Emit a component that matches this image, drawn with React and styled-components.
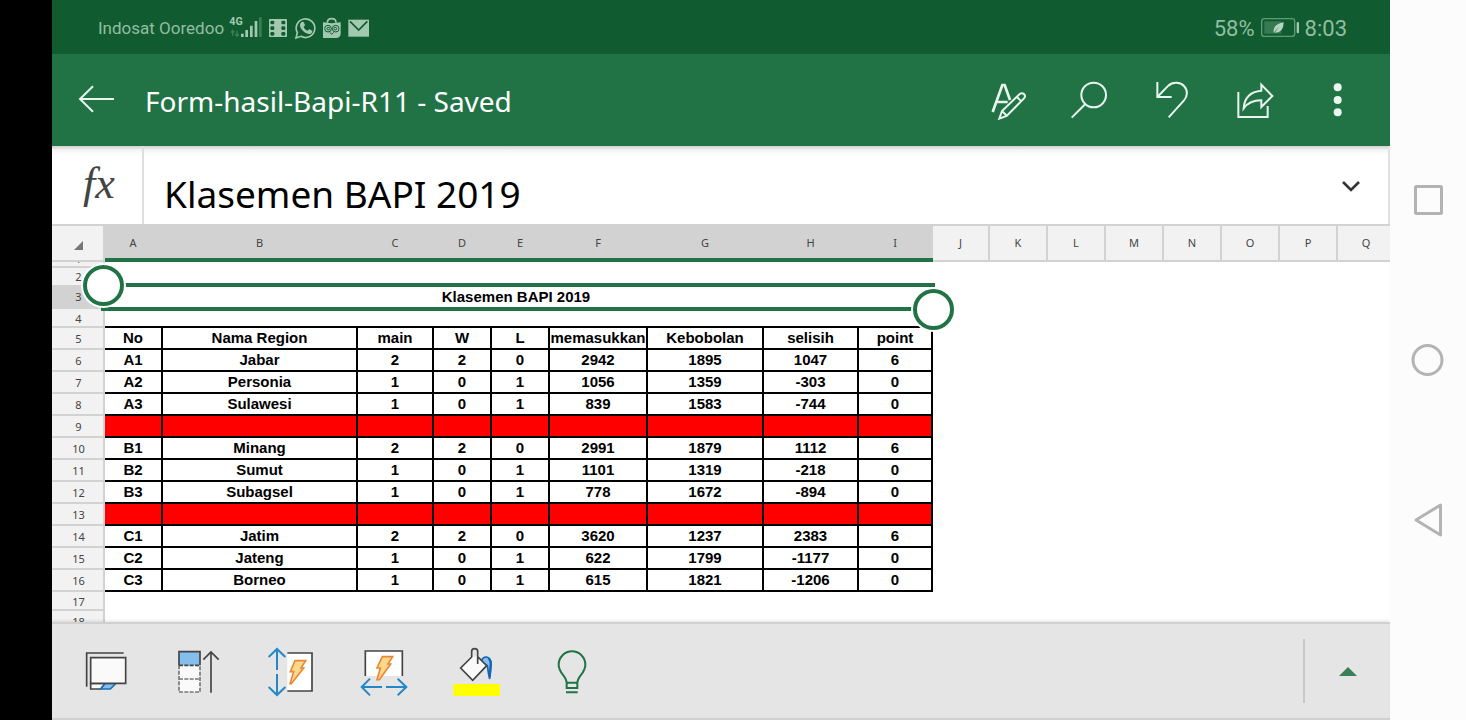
import React from "react";
import styled, { createGlobalStyle, css } from "styled-components";

const GlobalStyle = createGlobalStyle`
  * {
    box-sizing: border-box;
  }
  body {
    margin: 0;
    background: #fcfcfc;
  }
  button {
    padding: 0;
    border: 0;
    background: none;
    cursor: pointer;
  }
  svg {
    display: block;
    flex: none;
  }
`;

const Screen = styled.div`
  display: flex;
  height: 100vh;
  overflow: hidden;
  font-family: "Noto Sans", sans-serif;
`;

const Notch = styled.div`
  flex: none;
  width: 52px;
  background: #000;
`;

const AppColumn = styled.main`
  flex: 1;
  min-width: 0;
  display: flex;
  flex-direction: column;
  background: #fff;
`;

const StatusBar = styled.div`
  flex: none;
  height: 54px;
  padding: 2px 43px 0 46px;
  display: flex;
  align-items: center;
  justify-content: space-between;
  background: #105c30;
  color: #93bda2;
  font-family: Roboto, sans-serif;
`;

const StatusGroup = styled.div`
  display: flex;
  align-items: center;
  gap: ${(props) => props.$gap}px;
`;

const Carrier = styled.span`
  padding: 0 2px 1px 0;
  font-size: 17px;
`;

const StatusValue = styled.span`
  font-size: 22px;
`;

const AppBar = styled.header`
  flex: none;
  height: 92px;
  padding: 0 11px 0 4px;
  display: flex;
  align-items: center;
  background: #217346;
  color: #e9f7ee;
`;

const BarButton = styled.button`
  flex: none;
  width: 82px;
  height: 92px;
  display: flex;
  align-items: center;
  justify-content: center;
  color: inherit;
`;

const FileName = styled.h1`
  flex: 1;
  min-width: 0;
  margin: 0;
  padding: 2px 0 0 7px;
  font-size: 28px;
  font-weight: 400;
  line-height: 40px;
  white-space: nowrap;
  color: #fff;
`;

const FormulaBar = styled.div`
  flex: none;
  height: 78px;
  display: flex;
  align-items: stretch;
  border-right: 2px solid #e2e2e2;
  background: linear-gradient(#cfcfcf, #f4f4f4 4px, #fff 9px);
`;

const FxButton = styled.button`
  width: 92px;
  padding: 0 0 4px 4px;
  border-right: 2px solid #dedede;
  font: italic 44px "Liberation Serif", serif;
  color: #444;
`;

const FormulaInput = styled.input`
  flex: 1;
  min-width: 0;
  padding: 16px 0 0 20px;
  border: 0;
  outline: 0;
  background: none;
  font: 37px "Noto Sans", sans-serif;
  color: #000;
`;

const ExpandButton = styled.button`
  width: 74px;
  padding-top: 2px;
  display: flex;
  align-items: center;
  justify-content: center;
  color: #333;
`;

const SheetView = styled.div`
  flex: 1;
  min-height: 0;
  overflow: hidden;
`;

const Sheet = styled.table`
  width: 1344px;
  table-layout: fixed;
  border-collapse: separate;
  border-spacing: 0;
`;

const ColumnHead = styled.th`
  height: 38px;
  padding: 0;
  border-top: 2px solid #d2d2d2;
  border-right: 2px solid #d2d2d2;
  border-bottom: 2px solid #d2d2d2;
  background: #f2f2f2;
  font-size: 11px;
  font-weight: 400;
  line-height: 16px;
  color: #444;
  ${(props) =>
    props.$selected &&
    css`
      padding: 2px 2px 0 0;
      border-right: 0;
      border-bottom: 4px solid #217346;
      background: #d2d2d2;
    `}
`;

const SelectAll = styled.button`
  width: 100%;
  height: 34px;
  padding: 4px 0 0 2px;
  display: flex;
  align-items: center;
  justify-content: center;
`;

const RowHead = styled.th`
  padding: 0;
  border-right: 2px solid #d2d2d2;
  border-bottom: 2px solid ${(props) => (props.$unruled ? "#f2f2f2" : "#d2d2d2")};
  background: ${(props) => (props.$selected ? "#d2d2d2" : "#f2f2f2")};
  font-size: 11px;
  font-weight: 400;
  color: #444;
`;

const RowLabel = styled.div`
  height: ${(props) => props.$height - 2}px;
  padding: 2px 0 0 2px;
  display: flex;
  align-items: center;
  justify-content: center;
  line-height: 16px;
  overflow: hidden;
  ${(props) =>
    props.$scrolled &&
    css`
      padding-top: 0;
      align-items: flex-end;
      line-height: 14px;
    `}
`;

const Cell = styled.td`
  padding: 0;
  border-right: 2px solid #000;
  border-bottom: 2px solid #000;
  background: ${(props) => (props.$filled ? "#f00" : "#fff")};
  font: bold 15px/16px "Liberation Sans", Arial, sans-serif;
  text-align: center;
  white-space: nowrap;
  overflow: hidden;
`;

const BlankCell = styled.td`
  padding: 0;
  border-bottom: ${(props) => (props.$ruled ? "2px solid #000" : "0")};
`;

const TitleCell = styled.td`
  position: relative;
  padding: 0 6px 0 0;
  font: bold 15px/16px "Liberation Sans", Arial, sans-serif;
  text-align: center;
`;

const Selection = styled.div`
  position: absolute;
  inset: -2px -2px -2px -4px;
  border-top: 4px solid #217346;
  border-bottom: 4px solid #217346;
`;

const Handle = styled.span`
  position: absolute;
  width: 41px;
  height: 41px;
  border: 4px solid #217346;
  border-radius: 50%;
  background: #fff;
  box-shadow: 0 0 0 2px #fff;
  ${(props) =>
    props.$end ? "right: -19px; bottom: -23px;" : "left: -18px; top: -22px;"}
`;

const Toolbar = styled.footer`
  flex: none;
  height: 98px;
  padding-left: 7px;
  display: flex;
  align-items: center;
  border-top: 2px solid #d0d0d0;
  border-bottom: 2px solid #d0d0d0;
  background: #e5e5e5;
  box-shadow: 0 -1px 3px rgba(0, 0, 0, 0.12);
`;

const ToolButton = styled.button`
  width: 93px;
  height: 94px;
  display: flex;
  align-items: center;
  justify-content: center;
`;

const MoreTools = styled.button`
  width: 87px;
  height: 64px;
  margin-left: auto;
  border-left: 2px solid #c8c8c8;
  display: flex;
  align-items: center;
  justify-content: center;
`;

const SystemNav = styled.nav`
  flex: none;
  width: 76px;
  display: flex;
  flex-direction: column;
  justify-content: center;
  background: #fcfcfc;
`;

const NavButton = styled.button`
  height: 160px;
  display: flex;
  align-items: center;
  justify-content: center;
`;

const columns = [
  { name: "A", width: 58 },
  { name: "B", width: 195 },
  { name: "C", width: 76 },
  { name: "D", width: 58 },
  { name: "E", width: 58 },
  { name: "F", width: 98 },
  { name: "G", width: 116 },
  { name: "H", width: 95 },
  { name: "I", width: 74 },
  { name: "J", width: 57 },
  { name: "K", width: 58 },
  { name: "L", width: 58 },
  { name: "M", width: 58 },
  { name: "N", width: 58 },
  { name: "O", width: 58 },
  { name: "P", width: 58 },
  { name: "Q", width: 58 },
];

const blank = ["", "", "", "", "", "", "", "", ""];

const standings = [
  ["No", "Nama Region", "main", "W", "L", "memasukkan", "Kebobolan", "selisih", "point"],
  ["A1", "Jabar", 2, 2, 0, 2942, 1895, 1047, 6],
  ["A2", "Personia", 1, 0, 1, 1056, 1359, -303, 0],
  ["A3", "Sulawesi", 1, 0, 1, 839, 1583, -744, 0],
  blank,
  ["B1", "Minang", 2, 2, 0, 2991, 1879, 1112, 6],
  ["B2", "Sumut", 1, 0, 1, 1101, 1319, -218, 0],
  ["B3", "Subagsel", 1, 0, 1, 778, 1672, -894, 0],
  blank,
  ["C1", "Jatim", 2, 2, 0, 3620, 1237, 2383, 6],
  ["C2", "Jateng", 1, 0, 1, 622, 1799, -1177, 0],
  ["C3", "Borneo", 1, 0, 1, 615, 1821, -1206, 0],
];

const StatusIcon = ({ x, width = 24, children }) => (
  <svg
    width={width}
    height="24"
    viewBox={`${x} 48 ${width * 3} 72`}
    fill="#a3c8b0"
    aria-hidden="true"
  >
    {children}
  </svg>
);

const BarIcon = ({ x, children }) => (
  <svg
    width="42"
    height="42"
    viewBox={`${x} 237 126 126`}
    fill="none"
    stroke="currentColor"
    strokeWidth="6"
    aria-hidden="true"
  >
    {children}
  </svg>
);

const ToolIcon = ({ x, children }) => (
  <svg
    width="53"
    height="54"
    viewBox={`${x} 72 159 162`}
    fill="none"
    stroke="#444"
    strokeWidth="5"
    aria-hidden="true"
  >
    {children}
  </svg>
);

const Status = () => (
  <StatusBar>
    <StatusGroup $gap={3}>
      <Carrier>Indosat Ooredoo</Carrier>
      <StatusIcon x={534} width={34}>
        <text x="535" y="76" fontSize="32" fontWeight="700">
          4G
        </text>
        <path
          d="M545 92v16M540 98l5-7 5 7M558 92v16M553 102l5 7 5-7"
          fill="none"
          stroke="#3b7d55"
          strokeWidth="4"
        />
        <path d="M570 101h8v10h-8zM583 90h8v21h-8zM597 77h8v34h-8zM611 63h8v48h-8z" />
        <path d="M624 52h8v59h-8z" fill="#3b7d55" />
      </StatusIcon>
      <StatusIcon x={648}>
        <rect x="657" y="57" width="54" height="54" rx="2" />
        <g fill="#105c30">
          <rect x="661" y="62" width="12" height="11" rx="4" />
          <rect x="661" y="79" width="12" height="11" rx="4" />
          <rect x="661" y="96" width="12" height="11" rx="4" />
          <rect x="694" y="62" width="12" height="11" rx="4" />
          <rect x="694" y="79" width="12" height="11" rx="4" />
          <rect x="694" y="96" width="12" height="11" rx="4" />
        </g>
      </StatusIcon>
      <StatusIcon x={729}>
        <path
          d="M738 114l4-16a28 28 0 1 1 11 11z"
          fill="none"
          stroke="#a3c8b0"
          strokeWidth="5"
        />
        <path d="M754 67c3-3 7-2 8 1l3 7c0 3-4 4-4 6 2 5 6 9 11 11 3 0 4-5 7-4l7 4c3 3-2 10-8 10-12 0-28-14-28-27 0-3 2-6 4-8z" />
      </StatusIcon>
      <StatusIcon x={810}>
        <path d="M819 67l26 3 27-3v35q-1 10-12 12h-41z" />
        <path d="M832 68q0-12 13-12t13 12" fill="none" stroke="#a3c8b0" strokeWidth="5" />
        <g fill="none" stroke="#105c30" strokeWidth="3">
          <circle cx="834" cy="86" r="10" />
          <circle cx="857" cy="86" r="10" />
          <circle cx="835" cy="86" r="4" />
          <circle cx="856" cy="86" r="4" />
          <path d="M840 97l5 6 6-6" />
        </g>
      </StatusIcon>
      <StatusIcon x={891}>
        <path d="M895 59h62v51h-62z" />
        <path d="M900 64l26 26 26-26" fill="none" stroke="#105c30" strokeWidth="5" />
      </StatusIcon>
    </StatusGroup>
    <StatusGroup $gap={5}>
      <StatusValue>58%</StatusValue>
      <StatusIcon x={894} width={40}>
        <rect
          x="899"
          y="56"
          width="99"
          height="53"
          rx="8"
          fill="none"
          stroke="#5f9a76"
          strokeWidth="4"
        />
        <path d="M907 64h51v37h-51z" fill="#377a52" />
        <path d="M935 100q-4-27 30-33q0 32-27 31l14-19-16 18z" fill="#b5d4c0" />
        <rect x="1004" y="66" width="7" height="34" rx="3" />
      </StatusIcon>
      <StatusValue>8:03</StatusValue>
    </StatusGroup>
  </StatusBar>
);

const Header = () => (
  <AppBar>
    <BarButton aria-label="Back">
      <BarIcon x={78}>
        <path d="M192 297H90M129 259L90 297l39 38" />
      </BarIcon>
    </BarButton>
    <FileName>Form-hasil-Bapi-R11 - Saved</FileName>
    <BarButton aria-label="Edit">
      <BarIcon x={87}>
        <path d="M98 336l29-81h7l16 45M109 306h34" strokeWidth="8" />
        <path d="M118 356l8-23 53-51q7-5 13 0 6 7 0 13l-52 53zM126 333l14 14M170 290l14 14" />
      </BarIcon>
    </BarButton>
    <BarButton aria-label="Find">
      <BarIcon x={333}>
        <circle cx="401" cy="285" r="37" />
        <path d="M376 312l-41 41" />
      </BarIcon>
    </BarButton>
    <BarButton aria-label="Undo">
      <BarIcon x={579}>
        <path d="M592 246v45h43M592 291l33-34c13-12 36-11 47 1 12 13 11 31 0 43l-46 51" />
      </BarIcon>
    </BarButton>
    <BarButton aria-label="Share">
      <BarIcon x={825}>
        <path d="M835 276v75h88v-33" />
        <path d="M904 254l33 34-33 33v-20c-23 0-40 6-53 24 2-31 20-50 53-53z" />
      </BarIcon>
    </BarButton>
    <BarButton aria-label="More options">
      <BarIcon x={1071}>
        <g fill="currentColor" stroke="none">
          <circle cx="1133" cy="262" r="12" />
          <circle cx="1133" cy="300" r="12" />
          <circle cx="1133" cy="337" r="12" />
        </g>
      </BarIcon>
    </BarButton>
  </AppBar>
);

const Formula = () => (
  <FormulaBar>
    <FxButton aria-label="Insert function">fx</FxButton>
    <FormulaInput aria-label="Formula" defaultValue="Klasemen BAPI 2019" />
    <ExpandButton aria-label="Expand formula bar">
      <svg
        width="20"
        height="14"
        viewBox="0 0 20 14"
        fill="none"
        stroke="currentColor"
        strokeWidth="2.6"
      >
        <path d="M2 3l8 8 8-8" />
      </svg>
    </ExpandButton>
  </FormulaBar>
);

const Grid = () => (
  <SheetView>
    <Sheet>
      <colgroup>
        <col style={{ width: 53 }} />
        {columns.map((column) => (
          <col key={column.name} style={{ width: column.width }} />
        ))}
      </colgroup>
      <thead>
        <tr>
          <ColumnHead>
            <SelectAll aria-label="Select all">
              <svg width="9" height="9" viewBox="0 0 9 9">
                <path d="M9 0v9H0z" fill="#777" />
              </svg>
            </SelectAll>
          </ColumnHead>
          {columns.map((column, index) => (
            <ColumnHead key={column.name} scope="col" $selected={index < 9}>
              {column.name}
            </ColumnHead>
          ))}
        </tr>
      </thead>
      <tbody>
        <tr>
          <RowHead scope="row">
            <RowLabel $height={6} $scrolled>
              1
            </RowLabel>
          </RowHead>
          <BlankCell colSpan={9} />
        </tr>
        <tr>
          <RowHead scope="row" $unruled>
            <RowLabel $height={17}>2</RowLabel>
          </RowHead>
          <BlankCell colSpan={9} />
        </tr>
        <tr>
          <RowHead scope="row" $selected>
            <RowLabel $height={24}>3</RowLabel>
          </RowHead>
          <TitleCell colSpan={9}>
            Klasemen BAPI 2019
            <Selection>
              <Handle />
              <Handle $end />
            </Selection>
          </TitleCell>
        </tr>
        <tr>
          <RowHead scope="row">
            <RowLabel $height={19}>4</RowLabel>
          </RowHead>
          <BlankCell colSpan={9} $ruled />
        </tr>
        {standings.map((row, index) => (
          <tr key={index}>
            <RowHead scope="row">
              <RowLabel $height={22}>{index + 5}</RowLabel>
            </RowHead>
            {row.map((value, i) => (
              <Cell key={i} $filled={row === blank}>
                {value}
              </Cell>
            ))}
          </tr>
        ))}
        <tr>
          <RowHead scope="row">
            <RowLabel $height={19}>17</RowLabel>
          </RowHead>
        </tr>
        <tr>
          <RowHead scope="row">
            <RowLabel $height={22}>18</RowLabel>
          </RowHead>
        </tr>
      </tbody>
    </Sheet>
  </SheetView>
);

const Tools = () => (
  <Toolbar>
    <ToolButton aria-label="Sheets">
      <ToolIcon x={87}>
        <path d="M110 200V99h111" />
        <path d="M122 190v17h30l14-17z" fill="#fafafa" />
        <path d="M152 207l14-17h32l-17 17z" fill="#83beec" stroke="#1c6fba" />
        <path d="M122 113h105v77H122z" fill="#fafafa" />
      </ToolIcon>
    </ToolButton>
    <ToolButton aria-label="Freeze top row">
      <ToolIcon x={366}>
        <path d="M387 136h63v80h-63z" fill="#fafafa" stroke="none" />
        <path d="M387 136v80h63v-80M387 177h63" stroke="#777" strokeDasharray="12 4" />
        <path d="M387 136V95h63v41" fill="#83beec" />
        <path d="M387 136h63" strokeDasharray="12 4" />
        <path d="M483 218V97M460 119l23-23 23 23" />
      </ToolIcon>
    </ToolButton>
    <ToolButton aria-label="AutoFit row height">
      <ToolIcon x={645}>
        <path d="M712 99h74v114h-74" fill="#fff" />
        <path
          d="M681 150V88M656 111l25-24 25 24M681 162v63M656 201l25 24 25-24"
          stroke="#2488c8"
          strokeWidth="6"
        />
        <path d="M735 122h32l-14 22h8l-37 47h-4l11-36h-10z" fill="#fcd98a" stroke="#e8893a" />
      </ToolIcon>
    </ToolButton>
    <ToolButton aria-label="AutoFit column width">
      <ToolIcon x={54}>
        <path d="M76 168V93h111v75" fill="#fff" />
        <path
          d="M126 201H65M90 176l-25 25 25 25M138 201h61M173 176l26 25-26 25"
          stroke="#2488c8"
          strokeWidth="6"
        />
        <path d="M127 110h31l-14 22h8l-34 47h-7l10-35h-10z" fill="#fcd98a" stroke="#e8893a" />
      </ToolIcon>
    </ToolButton>
    <ToolButton aria-label="Fill color">
      <ToolIcon x={333}>
        <path d="M340 192h140v36H340z" fill="#ff0" stroke="none" />
        <path
          d="M423 124q5-14 17-13 14 3 13 24l-4 42q-4-16-7-40l-9-6z"
          fill="#83beec"
          stroke="#1565b5"
        />
        <path d="M446 116q8 6 6 20l-3 34" stroke="#1565b5" strokeWidth="7" />
        <path d="M362 144l34-33 17-2 27 28-42 44z" fill="#fafafa" stroke="none" />
        <path d="M413 132V94q0-8-9-8t-9 8v17l-33 33 36 37 42-44-27-27" />
      </ToolIcon>
    </ToolButton>
    <ToolButton aria-label="Tell me">
      <ToolIcon x={612}>
        <path
          d="M680 204v-15c0-21-24-29-24-55a40 40 0 0 1 80 0c0 26-24 34-24 55v15zM680 188h32M678 217h35"
          stroke="#217346"
          strokeWidth="6"
        />
      </ToolIcon>
    </ToolButton>
    <MoreTools aria-label="Show all commands">
      <svg width="18" height="9" viewBox="0 0 18 9">
        <path d="M0 9l9-9 9 9z" fill="#3a7f58" />
      </svg>
    </MoreTools>
  </Toolbar>
);

const NavIcon = ({ children }) => (
  <svg
    width="34"
    height="34"
    viewBox="0 0 34 34"
    fill="none"
    stroke="#b3b3b3"
    strokeWidth="3"
    strokeLinejoin="round"
    aria-hidden="true"
  >
    {children}
  </svg>
);

const Navigation = () => (
  <SystemNav>
    <NavButton aria-label="Recent apps">
      <NavIcon>
        <rect x="4.5" y="3.5" width="26" height="27" rx="1" />
      </NavIcon>
    </NavButton>
    <NavButton aria-label="Home">
      <NavIcon>
        <circle cx="16.5" cy="17" r="14.5" />
      </NavIcon>
    </NavButton>
    <NavButton aria-label="Back">
      <NavIcon>
        <path d="M5 17L29.500 2v30z" />
      </NavIcon>
    </NavButton>
  </SystemNav>
);

export default function App() {
  return (
    <Screen>
      <GlobalStyle />
      <Notch />
      <AppColumn>
        <Status />
        <Header />
        <Formula />
        <Grid />
        <Tools />
      </AppColumn>
      <Navigation />
    </Screen>
  );
}
